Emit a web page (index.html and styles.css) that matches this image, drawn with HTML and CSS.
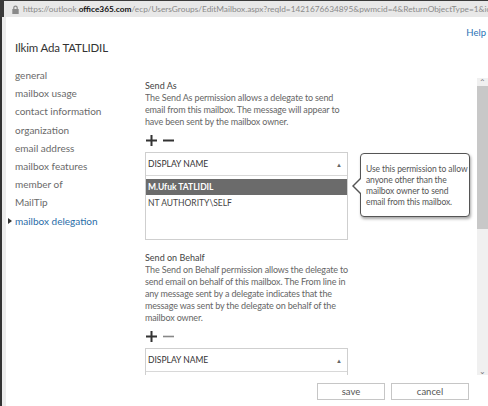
FILE: index.html
```html
<!DOCTYPE html>
<html>
<head>
<meta charset="utf-8">
<link rel="stylesheet" href="styles.css">
</head>
<body>
<div class="frame">
  <div class="addr">
    <svg class="lock" width="7" height="9" viewBox="0 0 7 9"><path d="M1.8 4V2.8a1.7 1.7 0 0 1 3.4 0V4" fill="none" stroke="#8a8a8a" stroke-width="1.2"/><rect x="0.3" y="4" width="6.4" height="5" fill="#8a8a8a"/></svg>
    <span class="url">https://outlook.<b>office365.com</b>/ecp/UsersGroups/EditMailbox.aspx?reqId=1421676634895&amp;pwmcid=4&amp;ReturnObjectType=1&amp;ic</span>
  </div>
  <div class="window">
    <div class="edge"></div>
    <div class="page">
      <div class="header">
        <h1 class="title">Ilkim Ada TATLIDIL</h1>
        <a class="help">Help</a>
      </div>
      <div class="body">
        <ul class="nav">
          <li>general</li>
          <li>mailbox usage</li>
          <li>contact information</li>
          <li>organization</li>
          <li>email address</li>
          <li>mailbox features</li>
          <li>member of</li>
          <li>MailTip</li>
          <li class="active">mailbox delegation</li>
        </ul>
        <div class="content">
          <section class="perm">
            <div class="perm-title">Send As</div>
            <p class="perm-desc">The Send As permission allows a delegate to send<br>email from this mailbox. The message will appear to<br>have been sent by the mailbox owner.</p>
            <div class="tools">
              <svg width="11" height="11" viewBox="0 0 11 11"><path d="M5.5 0v11M0 5.5h11" stroke="#333" stroke-width="2"/></svg>
              <svg width="11" height="11" viewBox="0 0 11 11"><path d="M0 5.5h11" stroke="#333" stroke-width="2"/></svg>
            </div>
            <div class="listbox tall">
              <div class="list-head"><span>DISPLAY NAME</span><span class="sort">&#9650;</span></div>
              <div class="list-row selected">M.Ufuk TATLIDIL</div>
              <div class="list-row">NT AUTHORITY\SELF</div>
            </div>
            <div class="tip">Use this permission to allow<br>anyone other than the<br>mailbox owner to send<br>email from this mailbox.</div>
          </section>
          <section class="perm">
            <div class="perm-title">Send on Behalf</div>
            <p class="perm-desc">The Send on Behalf permission allows the delegate to<br>send email on behalf of this mailbox. The From line in<br>any message sent by a delegate indicates that the<br>message was sent by the delegate on behalf of the<br>mailbox owner.</p>
            <div class="tools">
              <svg width="11" height="11" viewBox="0 0 11 11"><path d="M5.5 0v11M0 5.5h11" stroke="#333" stroke-width="2"/></svg>
              <svg width="11" height="11" viewBox="0 0 11 11"><path d="M0 5.5h11" stroke="#888" stroke-width="1.6"/></svg>
            </div>
            <div class="listbox">
              <div class="list-head"><span>DISPLAY NAME</span><span class="sort">&#9650;</span></div>
            </div>
          </section>
        </div>
        <div class="scrollbar">
          <span class="arrow">&#8963;</span>
          <div class="track"><div class="thumb"></div></div>
          <span class="arrow">&#8964;</span>
        </div>
      </div>
      <div class="footer">
        <button class="btn save">save</button>
        <button class="btn cancel">cancel</button>
      </div>
    </div>
  </div>
</div>
</body>
</html>
```
FILE: styles.css
```css
* { box-sizing: border-box; }
html, body { margin: 0; padding: 0; }
body {
  width: 488px;
  height: 406px;
  overflow: hidden;
  background: #fff;
  font-family: Lato, "Open Sans", sans-serif;
  color: #444;
}
.frame {
  display: flex;
  flex-direction: column;
  height: 406px;
}
.addr {
  height: 17px;
  flex: none;
  background: #e8e8e8;
  border-top: 1px solid #3a3a3a;
  border-left: 4px solid #3a3a3a;
  display: flex;
  align-items: center;
  padding-left: 8px;
  white-space: nowrap;
  overflow: hidden;
}
.lock { flex: none; margin-right: 4px; }
.url {
  font-size: 8.3px;
  color: #8a8a8a;
}
.url b { color: #111; font-weight: 700; }
.window {
  flex: 1;
  display: flex;
  min-height: 0;
}
.edge {
  width: 6px;
  flex: none;
  border-left: 2px solid #333;
  background: #ececec;
}
.page {
  flex: 1;
  display: flex;
  flex-direction: column;
  min-width: 0;
}
.header {
  height: 45px;
  flex: none;
  display: flex;
  justify-content: space-between;
  align-items: flex-start;
  padding: 0 2px 0 9px;
}
.title {
  margin: 21px 0 0;
  font-size: 11.5px;
  letter-spacing: -0.15px;
  font-weight: 400;
  color: #333;
  line-height: 20px;
}
.help {
  margin-top: 10px;
  font-size: 9.5px;
  color: #2a72b5;
}
.body {
  display: flex;
  height: 313px;
  flex: none;
}
.nav {
  list-style: none;
  margin: 0;
  padding: 4px 0 0 9px;
  width: 139px;
  flex: none;
}
.nav li {
  font-size: 10px;
  line-height: 18.2px;
  color: #6a6a6a;
  white-space: nowrap;
  position: relative;
}
.nav li.active { color: #2a6da8; }
.nav li.active::before {
  content: "";
  position: absolute;
  left: -7px;
  top: 6px;
  border-left: 4px solid #333;
  border-top: 3px solid transparent;
  border-bottom: 3px solid transparent;
}
.content {
  flex: 1;
  padding-top: 18px;
  position: relative;
  overflow: hidden;
}
.perm { position: relative; width: 210px; }
.perm + .perm { margin-top: 12px; }
.perm-title {
  font-size: 9px;
  line-height: 12px;
  color: #444;
}
.perm-desc {
  margin: 0;
  font-size: 9px;
  letter-spacing: -0.15px;
  line-height: 12px;
  color: #666;
  white-space: nowrap;
}
.tools {
  display: flex;
  gap: 6px;
  align-items: center;
  height: 24px;
  padding-left: 1px;
}
.listbox {
  width: 203px;
  border: 1px solid #cfcfcf;
  background: #fff;
}
.listbox.tall { height: 88px; }
.list-head {
  height: 23px;
  display: flex;
  align-items: center;
  justify-content: space-between;
  padding: 0 5px 0 2px;
  font-size: 8.5px;
  color: #333;
  border-bottom: 1px solid #d8d8d8;
  margin-bottom: 3px;
}
.sort { font-size: 6px; color: #666; }
.list-row {
  height: 16px;
  line-height: 16px;
  padding-left: 2px;
  font-size: 8.5px;
  color: #444;
}
.list-row.selected {
  background: #6b6b6b;
  color: #fff;
  font-weight: 700;
}
.tip {
  position: absolute;
  left: 215px;
  top: 73px;
  width: 110px;
  height: 64px;
  padding: 10px 0 0 5px;
  border: 1px solid #555;
  border-radius: 4px;
  background: #fff;
  box-shadow: 1px 2px 3px rgba(0,0,0,0.35);
  font-size: 8.5px;
  letter-spacing: -0.1px;
  line-height: 11px;
  color: #555;
  white-space: nowrap;
}
.tip::before, .tip::after {
  content: "";
  position: absolute;
  top: 24px;
  border-top: 8px solid transparent;
  border-bottom: 8px solid transparent;
}
.tip::before { left: -9px; border-right: 8px solid #555; }
.tip::after { left: -7px; border-right: 8px solid #fff; }
.scrollbar {
  width: 11px;
  flex: none;
  margin-top: 16px;
  height: 297px;
  background: #f0f0f0;
  display: flex;
  flex-direction: column;
  align-items: center;
}
.arrow { font-size: 8px; line-height: 8px; height: 8px; color: #777; }
.track { flex: 1; width: 100%; }
.thumb { height: 143px; background: #c8c8c8; }
.footer {
  display: flex;
  justify-content: flex-end;
  gap: 6px;
  padding: 8px 19px 0 0;
}
.btn {
  height: 17px;
  line-height: 15px;
  border: 1px solid #c6c6c6;
  background: #fff;
  font-family: inherit;
  font-size: 9.5px;
  color: #555;
  padding: 0;
}
.save { width: 68px; }
.cancel { width: 78px; }
```
